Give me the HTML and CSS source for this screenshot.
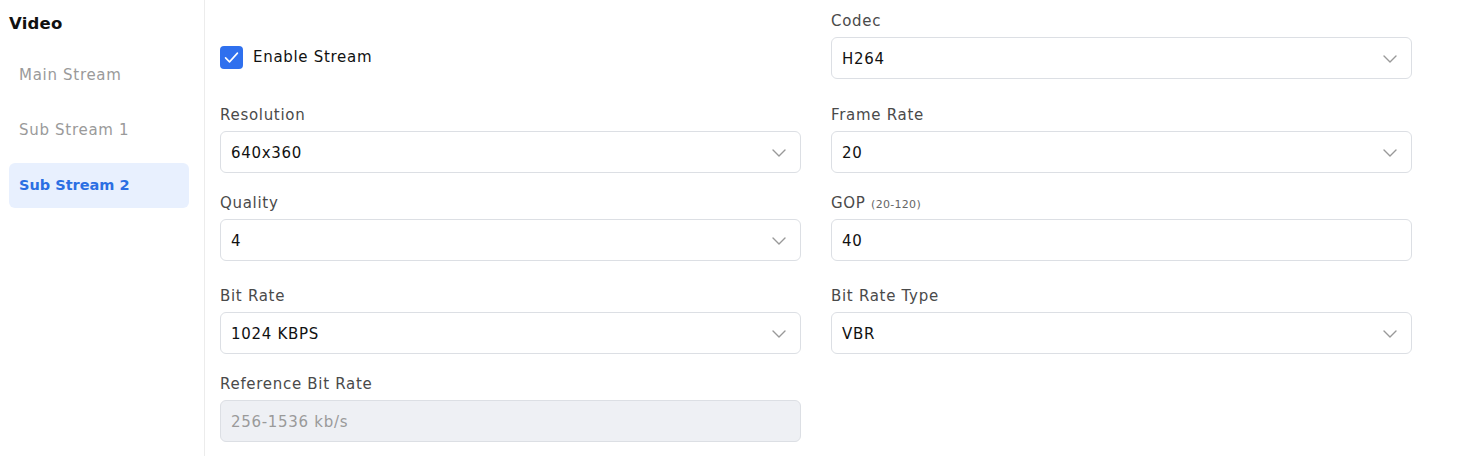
FILE: index.html
```html
<!DOCTYPE html>
<html>
<head>
<meta charset="utf-8">
<link rel="stylesheet" href="styles.css">
</head>
<body>
<div class="page">
  <aside class="sidebar">
    <div class="side-title">Video</div>
    <nav class="nav">
      <div class="nav-item">Main Stream</div>
      <div class="nav-item">Sub Stream 1</div>
      <div class="nav-item active">Sub Stream 2</div>
    </nav>
  </aside>
  <main class="content">
    <div class="grid">
      <div class="field row1 check-field">
        <label class="check">
          <span class="box"><svg viewBox="0 0 24 24" width="19" height="19"><path d="M4.5 12.5l5 5L19.5 6.5" fill="none" stroke="#fff" stroke-width="2" stroke-linecap="round" stroke-linejoin="round"/></svg></span>
          <span class="check-text">Enable Stream</span>
        </label>
      </div>
      <div class="field row1">
        <div class="label">Codec</div>
        <div class="select">H264<svg class="chev" viewBox="0 0 14 8" width="14" height="8"><path d="M1 1l6 6 6-6" fill="none" stroke="#999" stroke-width="1.4" stroke-linecap="round" stroke-linejoin="round"/></svg></div>
      </div>

      <div class="field row2">
        <div class="label">Resolution</div>
        <div class="select">640x360<svg class="chev" viewBox="0 0 14 8" width="14" height="8"><path d="M1 1l6 6 6-6" fill="none" stroke="#999" stroke-width="1.4" stroke-linecap="round" stroke-linejoin="round"/></svg></div>
      </div>
      <div class="field row2">
        <div class="label">Frame Rate</div>
        <div class="select">20<svg class="chev" viewBox="0 0 14 8" width="14" height="8"><path d="M1 1l6 6 6-6" fill="none" stroke="#999" stroke-width="1.4" stroke-linecap="round" stroke-linejoin="round"/></svg></div>
      </div>

      <div class="field row3">
        <div class="label">Quality</div>
        <div class="select">4<svg class="chev" viewBox="0 0 14 8" width="14" height="8"><path d="M1 1l6 6 6-6" fill="none" stroke="#999" stroke-width="1.4" stroke-linecap="round" stroke-linejoin="round"/></svg></div>
      </div>
      <div class="field row3">
        <div class="label">GOP <small>(20-120)</small></div>
        <div class="select">40</div>
      </div>

      <div class="field row4">
        <div class="label">Bit Rate</div>
        <div class="select">1024 KBPS<svg class="chev" viewBox="0 0 14 8" width="14" height="8"><path d="M1 1l6 6 6-6" fill="none" stroke="#999" stroke-width="1.4" stroke-linecap="round" stroke-linejoin="round"/></svg></div>
      </div>
      <div class="field row4">
        <div class="label">Bit Rate Type</div>
        <div class="select">VBR<svg class="chev" viewBox="0 0 14 8" width="14" height="8"><path d="M1 1l6 6 6-6" fill="none" stroke="#999" stroke-width="1.4" stroke-linecap="round" stroke-linejoin="round"/></svg></div>
      </div>

      <div class="field row5">
        <div class="label">Reference Bit Rate</div>
        <div class="select disabled">256-1536 kb/s</div>
      </div>
    </div>
  </main>
</div>
</body>
</html>
```

FILE: styles.css
```css
* { box-sizing: border-box; }
html, body { margin: 0; padding: 0; background: #fff; }
body {
  font-family: "DejaVu Sans", "Noto Sans", sans-serif;
  color: #1a1a1a;
  width: 1481px;
  height: 456px;
  overflow: hidden;
  letter-spacing: 0.7px;
}
.page {
  display: flex;
  height: 456px;
}
.sidebar {
  width: 205px;
  flex: none;
  border-right: 1px solid #ececec;
  padding: 13px 15px 0 9px;
}
.side-title {
  font-size: 16.5px;
  font-weight: 700;
  color: #111;
  line-height: 22px;
  margin-bottom: 18px;
  letter-spacing: 0.2px;
}
.nav {
  display: flex;
  flex-direction: column;
  gap: 10px;
}
.nav-item {
  height: 45px;
  line-height: 45px;
  padding-left: 10px;
  font-size: 15px;
  color: #9a9a9a;
  border-radius: 6px;
}
.nav-item.active {
  background: #e8f0fe;
  color: #2b6fe3;
  font-weight: 700;
  letter-spacing: 0;
  font-size: 14.5px;
  line-height: 44px;
}
.content {
  flex: 1;
  padding: 0 0 0 15px;
}
.grid {
  display: grid;
  grid-template-columns: 581px 581px;
  column-gap: 30px;
}
.field { display: flex; flex-direction: column; }
.label {
  font-size: 15px;
  color: #4a4a4a;
  line-height: 20px;
  height: 21px;
  padding-top: 1px;
  margin-bottom: 6px;
}
.label small { font-size: 11px; color: #666; line-height: 1; letter-spacing: 0.3px; }
.select {
  height: 42px;
  border: 1px solid #dcdfe4;
  border-radius: 6px;
  padding: 1px 14px 0 10px;
  display: flex;
  align-items: center;
  justify-content: space-between;
  font-size: 15px;
  color: #111;
}
.select.disabled {
  background: #eef0f4;
  color: #9a9a9a;
}
.chev { flex: none; }
.row1 { padding-top: 10px; }
.row2 { padding-top: 25px; }
.row3 { padding-top: 19px; }
.row4 { padding-top: 24px; }
.row5 { padding-top: 19px; }
.check-field { justify-content: flex-start; padding-top: 36px; height: 79px; }
.check {
  display: flex;
  align-items: center;
  gap: 10px;
  height: 42px;
}
.box {
  width: 23px;
  height: 23px;
  border-radius: 4px;
  background: #2f70ee;
  display: flex;
  align-items: center;
  justify-content: center;
}
.check-text { font-size: 15px; color: #111; }
```
